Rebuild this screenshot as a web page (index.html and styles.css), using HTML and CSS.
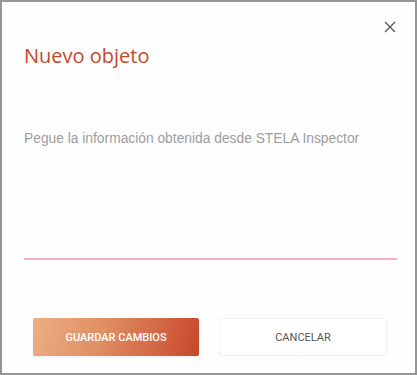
FILE: index.html
```html
<!DOCTYPE html>
<html lang="es">
<head>
  <meta charset="UTF-8">
  <meta name="viewport" content="width=device-width, initial-scale=1.0">
  <title>Nuevo objeto</title>
  <link rel="stylesheet" href="styles.css">
</head>
<body>
  <!-- Dialog -->
  <div class="dialog">
    <div class="dialog-top">
      <button class="close-btn" aria-label="Cerrar">
        <svg width="14" height="14" viewBox="0 0 14 14">
          <path d="M2 2 L12 12 M12 2 L2 12" stroke="#555" stroke-width="1.3" fill="none"/>
        </svg>
      </button>
    </div>

    <h2 class="dialog-title">Nuevo objeto</h2>

    <textarea class="paste-field" placeholder="Pegue la información obtenida desde STELA Inspector"></textarea>

    <div class="dialog-actions">
      <button class="btn btn-primary">Guardar cambios</button>
      <button class="btn btn-secondary">Cancelar</button>
    </div>
  </div>
</body>
</html>
```

FILE: styles.css
```css
body {
  margin: 0;
  padding: 0;
  background: #fff;
  font-family: 'Roboto', sans-serif;
}

/* Dialog */
.dialog {
  width: 417px;
  height: 375px;
  box-sizing: border-box;
  border: 2px solid #959595;
  background: #fefefe;
  padding: 18px 18px 17px 22px;
  display: flex;
  flex-direction: column;
}

.dialog-top {
  display: flex;
  justify-content: flex-end;
  height: 14px;
}

.close-btn {
  width: 14px;
  height: 14px;
  padding: 0;
  border: none;
  background: none;
  cursor: pointer;
  display: block;
}
.close-btn svg {
  display: block;
}

.dialog-title {
  margin: 10px 0 0;
  font-family: 'Open Sans', sans-serif;
  font-size: 20px;
  line-height: 24px;
  font-weight: 400;
  color: #c4482c;
}

/* Paste field */
.paste-field {
  margin: 50px 0 0;
  height: 142px;
  box-sizing: border-box;
  padding: 12px 0 0;
  border: none;
  border-bottom: 2px solid #f3b3bb;
  background: transparent;
  resize: none;
  outline: none;
  font-family: 'Liberation Sans', Arial, sans-serif;
  font-size: 13.8px;
  line-height: 18px;
  color: #444;
}
.paste-field::placeholder {
  color: #9d9d9d;
}

/* Buttons */
.dialog-actions {
  margin: 58px 10px 0 9px;
  display: flex;
  gap: 20px;
}

.btn {
  flex: 1;
  height: 38px;
  border-radius: 2px;
  font-family: 'Roboto', sans-serif;
  font-size: 11px;
  font-weight: 500;
  text-transform: uppercase;
  cursor: pointer;
}

.btn-primary {
  border: none;
  color: #fff;
  background: linear-gradient(105deg, #ecae84 0%, #e09064 40%, #c8472b 100%);
  box-shadow: 0 1px 2px rgba(0, 0, 0, 0.08);
}

.btn-secondary {
  border: 1px solid #f1f1f1;
  background: #fff;
  color: #555;
  font-weight: 400;
}
```
